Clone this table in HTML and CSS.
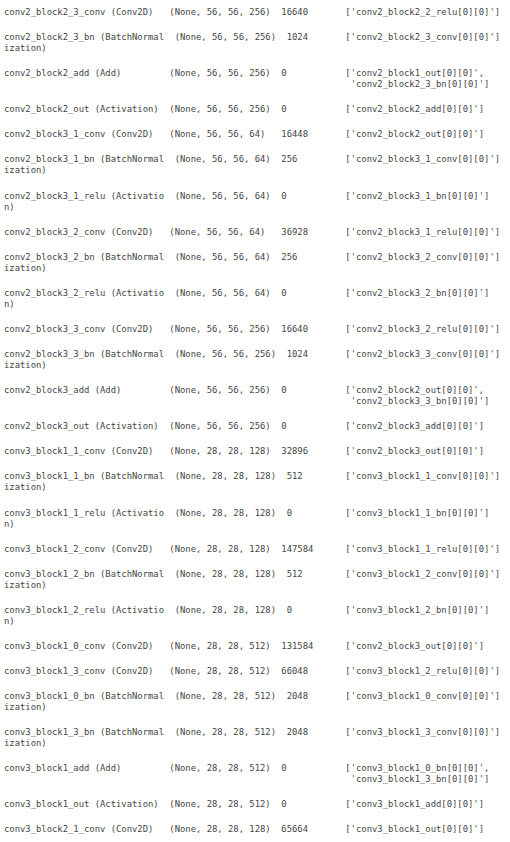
FILE: index.html
```html
<!DOCTYPE html>
<html lang="en">

<head>
    <meta charset="UTF-8">
    <meta name="viewport" content="width=device-width, initial-scale=1.0">
    <title>Model summary</title>
    <link rel="stylesheet" href="styles.css">
</head>

<body>
    <div class="output">
<pre class="layer">conv2_block2_3_conv (Conv2D)   (None, 56, 56, 256)  16640       ['conv2_block2_2_relu[0][0]']</pre>
<pre class="layer">conv2_block2_3_bn (BatchNormal  (None, 56, 56, 256)  1024       ['conv2_block2_3_conv[0][0]']
ization)</pre>
<pre class="layer">conv2_block2_add (Add)         (None, 56, 56, 256)  0           ['conv2_block1_out[0][0]',
                                                                 'conv2_block2_3_bn[0][0]']</pre>
<pre class="layer">conv2_block2_out (Activation)  (None, 56, 56, 256)  0           ['conv2_block2_add[0][0]']</pre>
<pre class="layer">conv2_block3_1_conv (Conv2D)   (None, 56, 56, 64)   16448       ['conv2_block2_out[0][0]']</pre>
<pre class="layer">conv2_block3_1_bn (BatchNormal  (None, 56, 56, 64)  256         ['conv2_block3_1_conv[0][0]']
ization)</pre>
<pre class="layer">conv2_block3_1_relu (Activatio  (None, 56, 56, 64)  0           ['conv2_block3_1_bn[0][0]']
n)</pre>
<pre class="layer">conv2_block3_2_conv (Conv2D)   (None, 56, 56, 64)   36928       ['conv2_block3_1_relu[0][0]']</pre>
<pre class="layer">conv2_block3_2_bn (BatchNormal  (None, 56, 56, 64)  256         ['conv2_block3_2_conv[0][0]']
ization)</pre>
<pre class="layer">conv2_block3_2_relu (Activatio  (None, 56, 56, 64)  0           ['conv2_block3_2_bn[0][0]']
n)</pre>
<pre class="layer">conv2_block3_3_conv (Conv2D)   (None, 56, 56, 256)  16640       ['conv2_block3_2_relu[0][0]']</pre>
<pre class="layer">conv2_block3_3_bn (BatchNormal  (None, 56, 56, 256)  1024       ['conv2_block3_3_conv[0][0]']
ization)</pre>
<pre class="layer">conv2_block3_add (Add)         (None, 56, 56, 256)  0           ['conv2_block2_out[0][0]',
                                                                 'conv2_block3_3_bn[0][0]']</pre>
<pre class="layer">conv2_block3_out (Activation)  (None, 56, 56, 256)  0           ['conv2_block3_add[0][0]']</pre>
<pre class="layer">conv3_block1_1_conv (Conv2D)   (None, 28, 28, 128)  32896       ['conv2_block3_out[0][0]']</pre>
<pre class="layer">conv3_block1_1_bn (BatchNormal  (None, 28, 28, 128)  512        ['conv3_block1_1_conv[0][0]']
ization)</pre>
<pre class="layer">conv3_block1_1_relu (Activatio  (None, 28, 28, 128)  0          ['conv3_block1_1_bn[0][0]']
n)</pre>
<pre class="layer">conv3_block1_2_conv (Conv2D)   (None, 28, 28, 128)  147584      ['conv3_block1_1_relu[0][0]']</pre>
<pre class="layer">conv3_block1_2_bn (BatchNormal  (None, 28, 28, 128)  512        ['conv3_block1_2_conv[0][0]']
ization)</pre>
<pre class="layer">conv3_block1_2_relu (Activatio  (None, 28, 28, 128)  0          ['conv3_block1_2_bn[0][0]']
n)</pre>
<pre class="layer">conv3_block1_0_conv (Conv2D)   (None, 28, 28, 512)  131584      ['conv2_block3_out[0][0]']</pre>
<pre class="layer">conv3_block1_3_conv (Conv2D)   (None, 28, 28, 512)  66048       ['conv3_block1_2_relu[0][0]']</pre>
<pre class="layer">conv3_block1_0_bn (BatchNormal  (None, 28, 28, 512)  2048       ['conv3_block1_0_conv[0][0]']
ization)</pre>
<pre class="layer">conv3_block1_3_bn (BatchNormal  (None, 28, 28, 512)  2048       ['conv3_block1_3_conv[0][0]']
ization)</pre>
<pre class="layer">conv3_block1_add (Add)         (None, 28, 28, 512)  0           ['conv3_block1_0_bn[0][0]',
                                                                 'conv3_block1_3_bn[0][0]']</pre>
<pre class="layer">conv3_block1_out (Activation)  (None, 28, 28, 512)  0           ['conv3_block1_add[0][0]']</pre>
<pre class="layer">conv3_block2_1_conv (Conv2D)   (None, 28, 28, 128)  65664       ['conv3_block1_out[0][0]']</pre>
    </div>
</body>

</html>
```

FILE: styles.css
```css
* {
    padding: 0px;
    margin: 0px;

    box-sizing: border-box;
}

html,
body {
    width: 100%;
    height: 100%;
    background-color: #ffffff;
    overflow: hidden;
}

.output {
    display: flex;
    flex-direction: column;

    padding: 7px 0 0 4px;
}

.layer {
    font-family: "DejaVu Sans Mono", "Liberation Mono", monospace;
    font-size: 8.875px;
    line-height: 11px;
    color: #444;

    margin-bottom: 14.1px;
    white-space: pre;
}
```
